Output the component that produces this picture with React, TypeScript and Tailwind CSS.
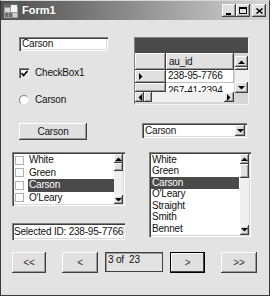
import React from "react";

const raised =
  "bg-[#e0e0e0] shadow-[inset_-1px_-1px_0_#404040,inset_1px_1px_0_#ffffff,inset_-2px_-2px_0_#9a9a9a]";
const sunken =
  "shadow-[inset_1px_1px_0_#808080,inset_2px_2px_0_#404040,inset_-1px_-1px_0_#ffffff,inset_-2px_-2px_0_#d8d8d8]";

function Tri({ dir }: { dir: "up" | "down" | "left" | "right" }) {
  const pts: Record<string, string> = {
    up: "0,4 7,4 3.5,0.5",
    down: "0,0 7,0 3.5,3.5",
    left: "4,0 4,7 0.5,3.5",
    right: "0,0 0,7 3.5,3.5",
  };
  const vertical = dir === "up" || dir === "down";
  return (
    <svg width={vertical ? 7 : 4} height={vertical ? 4 : 7} viewBox={vertical ? "0 0 7 4" : "0 0 4 7"}>
      <polygon points={pts[dir]} fill="#000" />
    </svg>
  );
}

function ArrowBtn({ dir, w, h }: { dir: "up" | "down" | "left" | "right"; w: string; h: string }) {
  return (
    <div className={`${w} ${h} ${raised} flex items-center justify-center shrink-0`}>
      <Tri dir={dir} />
    </div>
  );
}

function VScroll({ thumbH, w = "w-[10px]", btnH = "h-[10px]" }: { thumbH: string; w?: string; btnH?: string }) {
  return (
    <div className={`${w} h-full flex flex-col bg-[#efefef] shrink-0`}>
      <ArrowBtn dir="up" w={w} h={btnH} />
      <div className={`${w} ${thumbH} ${raised}`} />
      <div className="flex-1" />
      <ArrowBtn dir="down" w={w} h={btnH} />
    </div>
  );
}

function TitleIcon() {
  return (
    <svg width="16" height="16" viewBox="0 0 16 16">
      <rect x="0.5" y="0.5" width="15" height="15" fill="#9c9c9c" stroke="#5a5a5a" />
      <rect x="1" y="1" width="14" height="3" fill="#6a6a6a" />
      <rect x="2" y="5" width="5" height="4" fill="#d8d8d8" />
      <rect x="8" y="2" width="6" height="7" fill="#f4f4f4" />
      <rect x="2" y="10" width="3" height="4" fill="#6e6e6e" />
      <rect x="6" y="10" width="3" height="4" fill="#6e6e6e" />
      <rect x="10" y="10" width="4" height="4" fill="#cfcfcf" />
    </svg>
  );
}

function CaptionBtn({ children, className = "" }: { children: React.ReactNode; className?: string }) {
  return (
    <div className={`w-[14px] h-[13px] ${raised} flex items-center justify-center ${className}`}>{children}</div>
  );
}

function CheckBoxBox({ checked }: { checked?: boolean }) {
  return (
    <div className={`w-[10px] h-[10px] bg-white ${sunken} flex items-center justify-center shrink-0`}>
      {checked && (
        <svg width="7" height="7" viewBox="0 0 7 7">
          <polyline points="0.5,3 2.5,5.5 6.5,1" fill="none" stroke="#000" strokeWidth="1.6" />
        </svg>
      )}
    </div>
  );
}

export default function App() {
  const clbItems = ["White", "Green", "Carson", "O'Leary"];
  const lbItems = ["White", "Green", "Carson", "O'Leary", "Straight", "Smith", "Bennet"];
  return (
    <div className="w-[272px] h-[297px] bg-white font-['Liberation_Sans',Arial,sans-serif] text-[10px] tracking-[-0.2px] text-[#111] leading-none">
      <div className="w-[270px] h-[296px] border border-[#3a3a3a] border-t-[#d8d8d8] bg-[#e3e3e3] flex flex-col">
        {/* Title bar */}
        <div className="h-[19px] bg-linear-to-r from-[#4e4e4e] to-[#d6d6d6] flex items-center pl-[2px] pr-[3px] shrink-0">
          <TitleIcon />
          <span className="ml-[3px] text-white font-bold text-[11px] tracking-normal">Form1</span>
          <div className="flex-1" />
          <CaptionBtn>
            <div className="w-[5px] h-[2px] bg-black mt-[6px] -ml-[2px]" />
          </CaptionBtn>
          <CaptionBtn>
            <div className="w-[8px] h-[7px] border border-black border-t-2" />
          </CaptionBtn>
          <CaptionBtn className="ml-[2px]">
            <svg width="7" height="6" viewBox="0 0 7 6">
              <path d="M0.5 0.5 L6.5 5.5 M6.5 0.5 L0.5 5.5" stroke="#000" strokeWidth="1.5" />
            </svg>
          </CaptionBtn>
        </div>

        {/* Body */}
        <div className="flex flex-col">
          {/* Row 1 */}
          <div className="flex mt-[17px] h-[68px]">
            <div className="ml-[18px] w-[115px] flex flex-col">
              <div className={`w-[89px] h-[17px] bg-white ${sunken} flex items-center pl-[3px]`}>Carson</div>
              <div className="mt-[17px] h-[10px] flex items-center">
                <CheckBoxBox checked />
                <span className="ml-[6px]">CheckBox1</span>
              </div>
              <div className="mt-[17px] h-[10px] flex items-center">
                <div className="w-[10px] h-[10px] rounded-full bg-white border border-[#808080] border-r-[#e8e8e8] border-b-[#e8e8e8] shrink-0" />
                <span className="ml-[6px]">Carson</span>
              </div>
            </div>
            {/* DataGrid */}
            <div className="w-[115px] h-[68px] border border-[#808080] border-r-[#f4f4f4] border-b-[#f4f4f4] bg-[#d6d6d6] flex flex-col">
              <div className="h-[15px] bg-[#4a4a4a] shrink-0" />
              <div className="flex flex-1">
                <div className="w-[99px] flex flex-col">
                  <div className="flex h-[17px]">
                    <div className={`w-[31px] h-full ${raised} bg-[#d6d6d6]`} />
                    <div className={`w-[68px] h-full ${raised} bg-[#d6d6d6] flex items-center pl-[3px]`}>au_id</div>
                  </div>
                  <div className="flex h-[13px]">
                    <div className={`w-[31px] h-full ${raised} bg-[#d6d6d6] flex items-center pl-[4px]`}>
                      <Tri dir="right" />
                    </div>
                    <div className="w-[68px] h-full bg-white border-b border-r border-[#c0c0c0] flex items-center pl-[2px]">
                      238-95-7766
                    </div>
                  </div>
                  <div className="flex h-[9px] overflow-hidden">
                    <div className={`w-[31px] h-full ${raised} bg-[#d6d6d6]`} />
                    <div className="w-[68px] h-full bg-white pl-[2px] pt-[3px]">267-41-2394</div>
                  </div>
                  <div className="flex h-[10px] bg-[#efefef]">
                    <ArrowBtn dir="left" w="w-[9px]" h="h-[10px]" />
                    <div className={`w-[8px] h-[10px] ${raised}`} />
                    <div className="flex-1" />
                    <ArrowBtn dir="right" w="w-[10px]" h="h-[10px]" />
                  </div>
                </div>
                <div className="flex flex-col pt-[3px] pb-[11px] ml-px">
                  <VScroll thumbH="h-[3px]" w="w-[13px]" btnH="h-[11px]" />
                </div>
              </div>
            </div>
          </div>

          {/* Row 2 */}
          <div className="flex mt-[18px] h-[17px]">
            <div className={`ml-[18px] w-[68px] h-[17px] ${raised} flex items-center justify-center`}>Carson</div>
            <div className={`ml-[55px] w-[105px] h-[15px] bg-white ${sunken} flex items-center pl-[3px] pr-[2px]`}>
              <span className="flex-1">Carson</span>
              <ArrowBtn dir="down" w="w-[10px]" h="h-[11px]" />
            </div>
          </div>

          {/* Row 3 */}
          <div className="flex mt-[12px]">
            <div className="ml-[11px] w-[113px] flex flex-col">
              <div className={`h-[54px] bg-white ${sunken} flex p-[2px]`}>
                <div className="flex-1 flex flex-col">
                  {clbItems.map((t) => (
                    <div key={t} className="h-[12.5px] flex items-center pl-[1px]">
                      <div className="w-[9px] h-[9px] border border-[#b0b0b0] bg-white shrink-0" />
                      <span
                        className={`ml-[4px] h-full flex items-center pl-[1px] flex-1 ${
                          t === "Carson" ? "bg-[#4a4a4a] text-white" : ""
                        }`}
                      >
                        {t}
                      </span>
                    </div>
                  ))}
                </div>
                <VScroll thumbH="h-[8px]" w="w-[9px]" btnH="h-[9px]" />
              </div>
              <div className={`mt-[17px] h-[17px] bg-white ${sunken} flex items-center pl-[2px] whitespace-nowrap overflow-hidden`}>
                Selected ID: 238-95-7766
              </div>
            </div>
            <div className={`ml-[24px] w-[102px] h-[85px] bg-white ${sunken} flex p-[2px]`}>
              <div className="flex-1 flex flex-col pr-px">
                {lbItems.map((t) => (
                  <div
                    key={t}
                    className={`h-[11.5px] flex items-center pl-[1px] ${t === "Carson" ? "bg-[#4a4a4a] text-white" : ""}`}
                  >
                    {t}
                  </div>
                ))}
              </div>
              <VScroll thumbH="h-[14px]" w="w-[9px]" btnH="h-[10px]" />
            </div>
          </div>

          {/* Row 4 */}
          <div className="flex items-start mt-[12px] text-[#333]">
            <div className={`ml-[11px] w-[34px] h-[21px] ${raised} flex items-center justify-center`}>&lt;&lt;</div>
            <div className={`ml-[16px] w-[36px] h-[21px] ${raised} flex items-center justify-center`}>&lt;</div>
            <div className="ml-[7px] w-[58px] h-[20px] border border-[#404040] bg-[#e3e3e3] shadow-[inset_1px_1px_0_#9a9a9a] pl-[2px] pt-[2px] text-[#111]">
              3 of&nbsp; 23
            </div>
            <div
              className={`ml-[7px] w-[35px] h-[21px] border border-black bg-[#e0e0e0] shadow-[inset_-1px_-1px_0_#404040,inset_1px_1px_0_#ffffff] flex items-center justify-center`}
            >
              &gt;
            </div>
            <div className={`ml-[16px] w-[36px] h-[21px] ${raised} flex items-center justify-center`}>&gt;&gt;</div>
          </div>
        </div>
      </div>
    </div>
  );
}
